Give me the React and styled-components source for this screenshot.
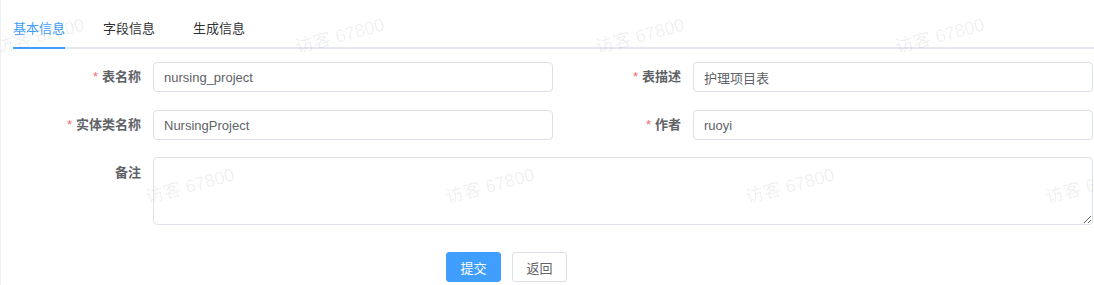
import React, { useState } from 'react'
import styled, { createGlobalStyle } from 'styled-components'

const GlobalStyle = createGlobalStyle`
    html, body {
        margin: 0;
        padding: 0;
        background: #fff;
    }
    body {
        font-family: "Liberation Sans", "Noto Sans CJK SC", sans-serif;
        font-size: 13px;
        color: #606266;
    }
`

const Page = styled.div`
    position: relative;
    height: 285px;
    overflow: hidden;
    padding: 11px 0 0 12px;
    box-sizing: border-box;
    border-left: 1px solid #f0f1f4;
`

const TabNav = styled.div`
    display: flex;
    align-items: flex-end;
    position: relative;
    border-bottom: 2px solid #e4e7ed;
`

const Tab = styled.div`
    position: relative;
    height: 36px;
    line-height: 36px;
    padding: 0 19px;
    font-size: 13px;
    color: ${p => (p.$active ? '#409eff' : '#303133')};
    cursor: pointer;
    &:first-child { padding-left: 0; }
    &:last-child { padding-right: 0; }
    &::after {
        content: '';
        position: absolute;
        left: ${p => (p.$first ? '0' : '19px')};
        right: 19px;
        bottom: -2px;
        height: 2px;
        background: ${p => (p.$active ? '#409eff' : 'transparent')};
    }
`

const Form = styled.form`
    padding: 13px 1px 0 0;
    display: grid;
    grid-template-columns: 1fr 1fr;
    row-gap: 18px;
`

const Item = styled.div`
    display: flex;
    align-items: flex-start;
    grid-column: ${p => (p.$wide ? '1 / span 2' : 'auto')};
`

const Label = styled.label`
    width: 140px;
    flex-shrink: 0;
    box-sizing: border-box;
    padding-right: 12px;
    text-align: right;
    line-height: 30px;
    font-size: 13px;
    font-weight: 700;
    color: #606266;
    &::before {
        content: ${p => (p.$required ? "'*'" : 'none')};
        color: #f56c6c;
        margin-right: 4px;
        font-weight: 400;
    }
`

const Input = styled.input`
    flex: 1;
    min-width: 0;
    height: 30px;
    box-sizing: border-box;
    border: 1px solid #dcdfe6;
    border-radius: 4px;
    padding: 0 10px;
    font-family: inherit;
    font-size: 13px;
    color: #606266;
    outline: none;
    background: #fff;
`

const TextArea = styled.textarea`
    flex: 1;
    min-width: 0;
    height: 68px;
    box-sizing: border-box;
    border: 1px solid #e0e3e9;
    border-radius: 4px;
    padding: 5px 10px;
    font-family: inherit;
    font-size: 13px;
    color: #606266;
    outline: none;
    resize: vertical;
    margin-top: -1px;
`

const Actions = styled.div`
    grid-column: 1 / span 2;
    display: flex;
    gap: 11px;
    padding-left: 433px;
    margin-top: 9px;
`

const Button = styled.button`
    width: 55px;
    height: 30px;
    border-radius: 3px;
    font-family: inherit;
    font-size: 13px;
    cursor: pointer;
    border: 1px solid ${p => (p.$primary ? '#409eff' : '#dcdfe6')};
    background: ${p => (p.$primary ? '#409eff' : '#fff')};
    color: ${p => (p.$primary ? '#fff' : '#606266')};
`

const Watermarks = styled.div`
    position: absolute;
    inset: 0;
    pointer-events: none;
    z-index: 5;
`

const Mark = styled.span`
    position: absolute;
    width: 110px;
    text-align: center;
    white-space: nowrap;
    font-size: 18px;
    line-height: 22px;
    color: rgba(0, 0, 0, 0.07);
    transform: rotate(-15deg);
`

const tabs = ['基本信息', '字段信息', '生成信息']

const marks = [
    [39, 36], [339, 36], [639, 36], [939, 36],
    [189, 186], [489, 186], [789, 186], [1089, 186],
]

const App = () => {
    const [active, setActive] = useState(0)
    return (
        <Page>
            <GlobalStyle />
            <TabNav>
                {tabs.map((t, i) => (
                    <Tab key={t} $active={active === i} $first={i === 0} onClick={() => setActive(i)}>{t}</Tab>
                ))}
            </TabNav>
            <Form onSubmit={e => e.preventDefault()}>
                <Item>
                    <Label $required>表名称</Label>
                    <Input defaultValue="nursing_project" />
                </Item>
                <Item>
                    <Label $required>表描述</Label>
                    <Input defaultValue="护理项目表" />
                </Item>
                <Item>
                    <Label $required>实体类名称</Label>
                    <Input defaultValue="NursingProject" />
                </Item>
                <Item>
                    <Label $required>作者</Label>
                    <Input defaultValue="ruoyi" />
                </Item>
                <Item $wide>
                    <Label>备注</Label>
                    <TextArea />
                </Item>
                <Actions>
                    <Button $primary type="submit">提交</Button>
                    <Button type="button">返回</Button>
                </Actions>
            </Form>
            <Watermarks>
                {marks.map(([x, y]) => (
                    <Mark key={x + '-' + y} style={{ left: x - 55, top: y - 11 }}>访客 67800</Mark>
                ))}
            </Watermarks>
        </Page>
    )
}

export default App
